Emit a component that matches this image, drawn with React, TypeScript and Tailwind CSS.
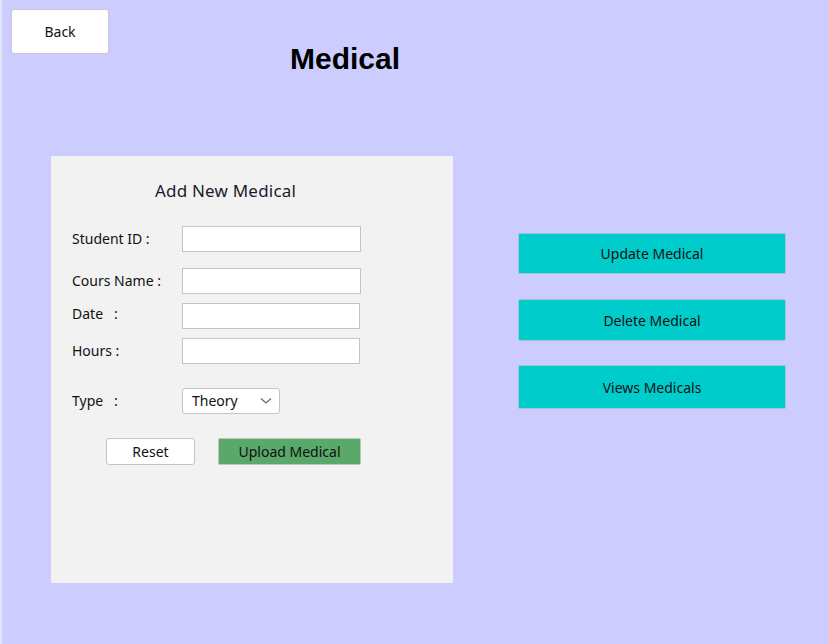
import React from 'react';

const labelCls = 'w-[110px] text-[14px] text-[#111]';
const inputCls = 'h-[26px] bg-white border border-[#c4c4c4] outline-none px-1 text-[14px]';

const Row = ({
  label,
  width = 'w-[179px]',
  className = '',
  labelExtra = '',
}: {
  label: string;
  width?: string;
  className?: string;
  labelExtra?: string;
}) => (
  <div className={`flex items-center ${className}`}>
    <span className={`${labelCls} ${labelExtra}`}>{label}</span>
    <input className={`${inputCls} ${width}`} />
  </div>
);

export default function App() {
  return (
    <div
      className="w-[828px] h-[644px] bg-[#ccccff] border-l-2 border-[#e4e4fa] overflow-hidden"
      style={{ fontFamily: '"Noto Sans", "Open Sans", sans-serif' }}
    >
      {/* header */}
      <div className="flex items-start">
        <button className="ml-[9px] mt-[9px] w-[98px] h-[45px] bg-white border border-[#c8c8d4] rounded-[3px] text-[14px] text-[#111]">
          Back
        </button>
        <h1
          className="ml-[181px] mt-[41px] text-[30px] leading-[36px] font-bold text-black"
          style={{ fontFamily: '"Liberation Sans", Arial, sans-serif' }}
        >
          Medical
        </h1>
      </div>

      <div className="flex items-start mt-[79px]">
        {/* form panel */}
        <div className="ml-[49px] w-[402px] h-[427px] bg-[#f2f2f2] pl-[21px]">
          <div className="mt-[22px] ml-[83px] text-[17px] tracking-[0.2px] text-[#1a1a2a]">Add New Medical</div>

          <Row label="Student ID :" className="mt-[22px]" />
          <Row label="Cours Name :" className="mt-[16px]" />
          <Row label="Date   :" width="w-[178px] h-[25px]" labelExtra="mb-[6px]" className="mt-[9px] whitespace-pre" />
          <Row label="Hours :" width="w-[178px]" className="mt-[8px]" />

          <div className="flex items-center mt-[24px]">
            <span className={`${labelCls} whitespace-pre`}>Type   :</span>
            <div className="w-[98px] h-[26px] bg-white border border-[#c4c4c4] rounded-[3px] flex items-center justify-between pl-[9px] pr-[7px]">
              <span className="text-[14px] text-[#111]">Theory</span>
              <svg width="12" height="8" viewBox="0 0 12 8" fill="none">
                <path d="M1 1.5 L6 6 L11 1.5" stroke="#666" strokeWidth="1.2" />
              </svg>
            </div>
          </div>

          <div className="flex mt-[24px] ml-[34px] gap-[23px]">
            <button className="w-[89px] h-[27px] bg-white border border-[#c4c4c4] rounded-[3px] text-[14px] text-[#111]">
              Reset
            </button>
            <button className="w-[143px] h-[27px] bg-[#5aa86a] border border-[#b8c8b8] rounded-[2px] text-[14px] text-[#111]">
              Upload Medical
            </button>
          </div>
        </div>

        {/* actions */}
        <div className="ml-[65px] mt-[77px] flex flex-col">
          <button className="w-[268px] h-[41px] bg-[#00cccc] border border-[#9bc8d0] rounded-[2px] text-[14px] text-[#111]">
            Update Medical
          </button>
          <button className="mt-[25px] w-[268px] h-[42px] bg-[#00cccc] border border-[#9bc8d0] rounded-[2px] text-[14px] text-[#111]">
            Delete Medical
          </button>
          <button className="mt-[24px] w-[268px] h-[44px] bg-[#00cccc] border border-[#9bc8d0] rounded-[2px] text-[14px] text-[#111]">
            Views Medicals
          </button>
        </div>
      </div>
    </div>
  );
}
